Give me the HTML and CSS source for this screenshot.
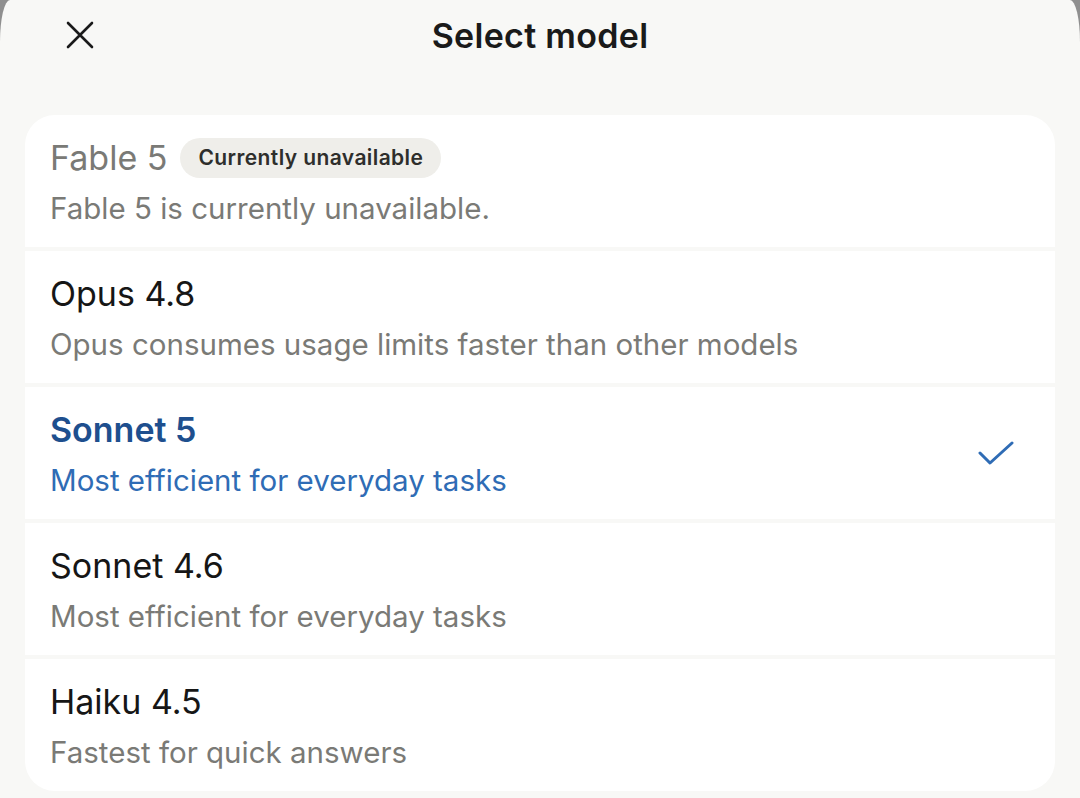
FILE: index.html
```html
<!DOCTYPE html>
<html lang="en">
<head>
    <meta charset="UTF-8">
    <meta name="viewport" content="width=device-width, initial-scale=1.0">
    <title>Select model</title>
    <link rel="stylesheet" href="styles.css">
</head>
<body>
    <div class="sheet">
        <header class="header">
            <button class="close" aria-label="Close">
                <svg width="28" height="28" viewBox="0 0 28 28">
                    <path d="M2 2 L26 26 M26 2 L2 26" stroke="#1a1a1a" stroke-width="2.6" stroke-linecap="round" fill="none"/>
                </svg>
            </button>
            <h1>Select model</h1>
        </header>

        <ul class="models">
            <li class="model disabled">
                <div class="model-name">
                    <span>Fable 5</span>
                    <span class="badge">Currently unavailable</span>
                </div>
                <div class="model-desc">Fable 5 is currently unavailable.</div>
            </li>
            <li class="model">
                <div class="model-name">Opus 4.8</div>
                <div class="model-desc">Opus consumes usage limits faster than other models</div>
            </li>
            <li class="model selected">
                <div class="model-text">
                    <div class="model-name">Sonnet 5</div>
                    <div class="model-desc">Most efficient for everyday tasks</div>
                </div>
                <svg class="check" width="38" height="26" viewBox="0 0 38 26">
                    <path d="M3 12 L13 22 L35 2" stroke="#2f6cb5" stroke-width="3" stroke-linecap="round" stroke-linejoin="round" fill="none"/>
                </svg>
            </li>
            <li class="model">
                <div class="model-name">Sonnet 4.6</div>
                <div class="model-desc">Most efficient for everyday tasks</div>
            </li>
            <li class="model">
                <div class="model-name">Haiku 4.5</div>
                <div class="model-desc">Fastest for quick answers</div>
            </li>
        </ul>
    </div>
</body>
</html>
```

FILE: styles.css
```css
body {
    margin: 0;
    background-color: #8f8f8f;
    font-family: Inter, "Noto Sans", sans-serif;
}
.sheet {
    height: 798px;
    background: #f8f8f6;
    border-radius: 10px 10px 0 0 / 42px 42px 0 0;
    overflow: hidden;
}
.header {
    position: relative;
    height: 115px;
    display: flex;
    justify-content: center;
}
.header h1 {
    margin: 0;
    padding-top: 16px;
    font-size: 34px;
    font-weight: 600;
    letter-spacing: 0.3px;
    line-height: 40px;
    color: #1a1a1a;
}
.close {
    position: absolute;
    left: 66px;
    top: 21px;
    padding: 0;
    border: none;
    background: none;
    line-height: 0;
}
.models {
    list-style: none;
    margin: 0 25px;
    padding: 0;
    display: flex;
    flex-direction: column;
    gap: 4px;
    border-radius: 30px;
    overflow: hidden;
}
.model {
    display: flex;
    flex-direction: column;
    justify-content: center;
    gap: 11px;
    height: 132px;
    box-sizing: border-box;
    padding: 2px 25px 0;
    background: white;
}
.model-name {
    display: flex;
    align-items: center;
    gap: 13px;
    font-size: 34px;
    line-height: 40px;
    color: #161616;
}
.model-desc {
    font-size: 29.5px;
    line-height: 38px;
    color: #7a7a76;
}
.disabled .model-name {
    color: #7a7a76;
}
.badge {
    padding: 0 18px;
    height: 40px;
    line-height: 40px;
    border-radius: 20px;
    background: #efeeea;
    color: #2e2e2c;
    font-size: 21px;
    font-weight: 600;
    letter-spacing: 0.4px;
}
.selected {
    flex-direction: row;
    align-items: center;
    justify-content: space-between;
}
.model-text {
    display: flex;
    flex-direction: column;
    gap: 11px;
}
.selected .model-name {
    color: #1e4f8e;
    font-weight: 600;
}
.selected .model-desc {
    color: #2f6cb5;
}
.check {
    margin-right: 15px;
}
```
